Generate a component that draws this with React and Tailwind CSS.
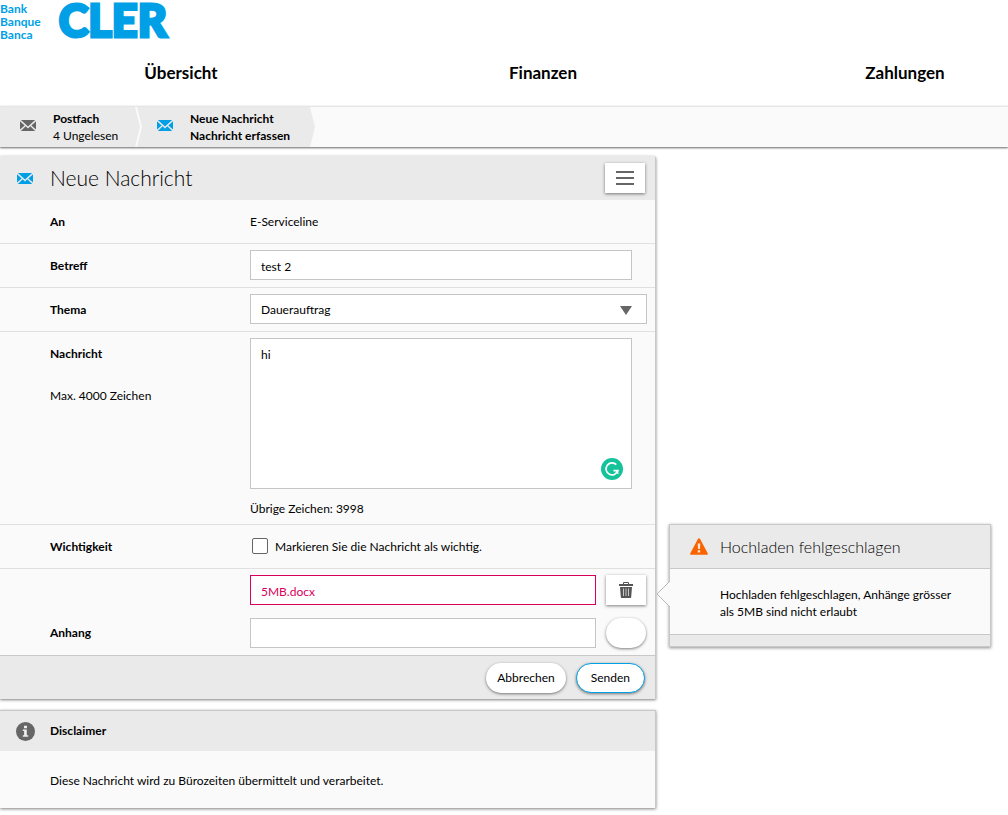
import React from "react";

const inputClass =
  "block h-[30px] min-w-0 flex-1 border border-[#c5c5c5] bg-white px-[10px] pt-[2px] text-black outline-none";
const raised = "bg-white shadow-[0_1px_3px_rgba(0,0,0,0.5)]";

function Envelope({ className }) {
  return (
    <svg viewBox="0 0 16 11" className={`h-[11px] w-4 shrink-0 ${className}`} aria-hidden="true">
      <path fill="currentColor" d="M0 1.2 4.7 5.4 0 9.6zM16 1.2 11.3 5.4 16 9.6zM.9 0h14.2L8 6.5zM5.7 6.3 8 8.4l2.3-2.1 4.9 4.7H.8z" />
    </svg>
  );
}

function CrumbArrow() {
  return (
    <svg viewBox="0 0 7 40" className="h-10 w-[7px] shrink-0" preserveAspectRatio="none" aria-hidden="true">
      <path d="M0 0 5 20 0 40z" fill="#eaeaea" />
    </svg>
  );
}

function Row({ label, htmlFor, note, children }) {
  return (
    <div className="flex min-h-[44px] border-b border-[#e0e0e0] pl-[50px] pr-2">
      <div className="w-[200px] shrink-0 pt-3">
        {htmlFor ? (
          <label htmlFor={htmlFor} className="block font-bold">{label}</label>
        ) : (
          <span className="block font-bold">{label}</span>
        )}
        {note && <p className="mt-[22px]">{note}</p>}
      </div>
      <div className="min-w-0 flex-1">{children}</div>
    </div>
  );
}

function ErrorPopover() {
  return (
    <aside
      role="alert"
      className="absolute left-full top-[-51px] ml-[23px] w-[322px] border border-[#c8c8c8] bg-[#fafafa] shadow-[0_1px_3px_rgba(0,0,0,0.45)]"
    >
      <svg viewBox="0 0 14 28" className="absolute -left-[14px] top-[55px] h-7 w-[14px]" aria-hidden="true">
        <path d="M14 1 1 14 14 27" fill="#fafafa" stroke="#b8b8b8" />
      </svg>
      <header className="flex h-11 items-center border-b border-[#c8c8c8] bg-[#eaeaea] pl-5">
        <svg viewBox="0 0 18 17" className="h-[17px] w-[18px]" aria-hidden="true">
          <path d="M9 .3c.5 0 .9.3 1.1.7l7.6 14.2c.4.8-.1 1.6-1 1.6H1.300c-.9 0-1.400-.8-1-1.600L7.900 1C8.100.6 8.500.3 9 .3z" fill="#fa6400" />
          <path d="M7.700 5.500h2.600l-.4 5.500H8.100zM7.800 12.200h2.400v2.300H7.800z" fill="#f3e7de" />
        </svg>
        <h2 className="ml-3 text-[16px] font-light">Hochladen fehlgeschlagen</h2>
      </header>
      <p className="pb-[14px] pl-[50px] pr-[30px] pt-[17px] leading-[17px]">
        Hochladen fehlgeschlagen, Anhänge grösser als 5MB sind nicht erlaubt
      </p>
      <div className="h-3 border-t border-[#c8c8c8] bg-[#eaeaea]" />
    </aside>
  );
}

export default function App() {
  return (
    <div className="bg-white pb-[6px] font-['Lato','Liberation_Sans',sans-serif] text-[12px] leading-5 text-black">
      <header>
        <a href="#" className="flex h-[43px] items-start gap-[18px] text-[#009fe6]">
          <span className="pt-[2px] text-[12px] font-bold leading-[13px]">
            Bank<br />Banque<br />Banca
          </span>
          <span className="text-[45px] font-black leading-[41px] [-webkit-text-stroke:3px_#009fe6]">CLER</span>
        </a>
        <nav className="flex h-[63px] items-center overflow-hidden pb-1 text-center text-[17px] font-bold">
          <a href="#uebersicht" className="w-[36%] max-w-[362px] shrink-0">Übersicht</a>
          <a href="#finanzen" className="w-[36%] max-w-[362px] shrink-0">Finanzen</a>
          <a href="#zahlungen" className="w-[36%] max-w-[362px] shrink-0">Zahlungen</a>
        </nav>
      </header>

      <nav className="flex h-[41px] border-t border-[#e6e6e6] bg-[#fafafa] leading-[17px] shadow-[0_1px_2px_rgba(0,0,0,0.6)]">
        <a href="#postfach" className="flex w-[135px] shrink-0 items-center gap-[17px] bg-[#eaeaea] pl-5">
          <Envelope className="mb-1 text-[#666666]" />
          <span><b className="block">Postfach</b>4 Ungelesen</span>
        </a>
        <svg viewBox="0 0 7 40" className="h-full w-[7px] shrink-0" preserveAspectRatio="none" aria-hidden="true">
          <path d="M0 0h7v40H0z" fill="#eaeaea" />
          <path d="M0 0h2L7 20 2 40H0L5 20z" fill="#fafafa" />
        </svg>
        <a href="#nachricht" className="flex w-[168px] shrink-0 items-center gap-[17px] bg-[#eaeaea] pl-[15px]">
          <Envelope className="mb-1 text-[#009fe6]" />
          <b className="block whitespace-nowrap">Neue Nachricht<br />Nachricht erfassen</b>
        </a>
        <CrumbArrow />
      </nav>

      <main className="mt-[9px] w-2/3 max-w-[656px]">
        <form
          onSubmit={(e) => e.preventDefault()}
          className="rounded-tr-[3px] border-r border-[#c8c8c8] bg-[#fafafa] shadow-[0_1px_3px_rgba(0,0,0,0.5)]"
        >
          <header className="flex h-11 items-center rounded-tr-[3px] bg-[#eaeaea] pl-[17px] pr-[10px]">
            <Envelope className="text-[#009fe6]" />
            <h1 className="ml-[17px] flex-1 text-[21px] font-light">Neue Nachricht</h1>
            <button type="button" aria-label="Menü" className={`flex h-[30px] w-10 items-center justify-center ${raised}`}>
              <svg viewBox="0 0 18 15" className="h-[15px] w-[18px]" aria-hidden="true">
                <path d="M0 1h18M0 7h18M0 13h18" stroke="#666" strokeWidth="2" />
              </svg>
            </button>
          </header>

          <Row label="An"><p className="pt-3">E-Serviceline</p></Row>
          <Row label="Betreff" htmlFor="betreff">
            <div className="flex pr-[15px] pt-[6px]">
              <input id="betreff" defaultValue="test 2" className={inputClass} />
            </div>
          </Row>
          <Row label="Thema" htmlFor="thema">
            <div className="relative flex pt-[6px]">
              <select id="thema" className={`appearance-none ${inputClass}`}>
                <option>Dauerauftrag</option>
              </select>
              <svg viewBox="0 0 12 9" className="pointer-events-none absolute right-[15px] top-[18px] h-[9px] w-3" aria-hidden="true">
                <path d="M0 0h12L6 9z" fill="#666" />
              </svg>
            </div>
          </Row>
          <Row label="Nachricht" htmlFor="nachricht" note="Max. 4000 Zeichen">
            <div className="relative mr-[15px] mt-[6px]">
              <textarea
                id="nachricht"
                defaultValue="hi"
                className="block h-[151px] w-full resize-none border border-[#c5c5c5] bg-white px-[10px] py-[6px] outline-none"
              />
              <svg viewBox="0 0 22 22" className="absolute bottom-[9px] right-[9px] h-[22px] w-[22px]" aria-hidden="true">
                <circle cx="11" cy="11" r="11" fill="#15c39a" />
                <path d="M15.300 6.700A6 6 0 1 0 16.800 12.600H12.500" fill="none" stroke="#fff" strokeWidth="1.700" />
                <path d="M17.400 11.800v4.600l-3-2.200z" fill="#fff" />
              </svg>
            </div>
            <p className="mb-[5px] mt-[10px]">Übrige Zeichen: 3998</p>
          </Row>
          <Row label="Wichtigkeit">
            <label className="flex items-center gap-[7px] pl-[2px] pt-3">
              <input type="checkbox" className="mb-[2px] h-4 w-4 appearance-none rounded-[2px] border border-[#666666] bg-white" />
              Markieren Sie die Nachricht als wichtig.
            </label>
          </Row>

          <div className="flex flex-col gap-[13px] pb-[7px] pl-[50px] pr-[9px] pt-[6px]">
            <div className="relative flex items-center gap-[10px] pl-[200px]">
              <input
                aria-label="Datei"
                readOnly
                defaultValue="5MB.docx"
                className="block h-[30px] min-w-0 flex-1 border border-[#d9005b] bg-white px-[10px] pt-[2px] text-[#d9005b] outline-none"
              />
              <button type="button" aria-label="Löschen" className={`flex h-[30px] w-10 items-center justify-center ${raised}`}>
                <svg viewBox="0 0 14 16" className="h-4 w-[14px]" aria-hidden="true">
                  <path d="M4.500 2V.500h5V2" fill="none" stroke="#555" />
                  <path d="M0 2h14v2H0zM1 5h12l-.8 10c0 .6-.5 1-1 1H2.800c-.5 0-1-.4-1-1z" fill="#555" />
                  <path d="M4.500 6.500v7.500M7 6.500v7.500M9.500 6.500v7.500" stroke="#c8c8c8" />
                </svg>
              </button>
              <ErrorPopover />
            </div>
            <div className="flex items-center gap-[10px]">
              <label htmlFor="anhang" className="w-[190px] shrink-0 font-bold">Anhang</label>
              <input id="anhang" className={inputClass} />
              <button type="button" aria-label="Durchsuchen" className={`h-[30px] w-10 rounded-full ${raised}`} />
            </div>
          </div>

          <footer className="flex h-11 items-center justify-end gap-[10px] border-t border-[#c8c8c8] bg-[#eaeaea] pr-[10px]">
            <button type="button" className={`h-[30px] rounded-full px-[11px] ${raised}`}>Abbrechen</button>
            <button type="submit" className={`h-[30px] rounded-full border border-[#009fe6] px-[14px] ${raised}`}>Senden</button>
          </footer>
        </form>

        <section className="mt-[11px] border-r border-t border-[#c8c8c8] bg-[#fafafa] shadow-[0_1px_3px_rgba(0,0,0,0.5)]">
          <header className="flex h-10 items-center gap-[15px] bg-[#eaeaea] pl-4">
            <svg viewBox="0 0 19 19" className="h-[19px] w-[19px]" aria-hidden="true">
              <circle cx="9.500" cy="9.500" r="9.500" fill="#666" />
              <path d="M8 3.800h3v2.400H8zM6.800 7.500h4v5.800h1.400v1.500H6.800v-1.500h1.300V9H6.800z" fill="#eee" />
            </svg>
            <h2 className="font-bold">Disclaimer</h2>
          </header>
          <p className="pb-[17px] pl-[50px] pt-5">Diese Nachricht wird zu Bürozeiten übermittelt und verarbeitet.</p>
        </section>
      </main>
    </div>
  );
}
